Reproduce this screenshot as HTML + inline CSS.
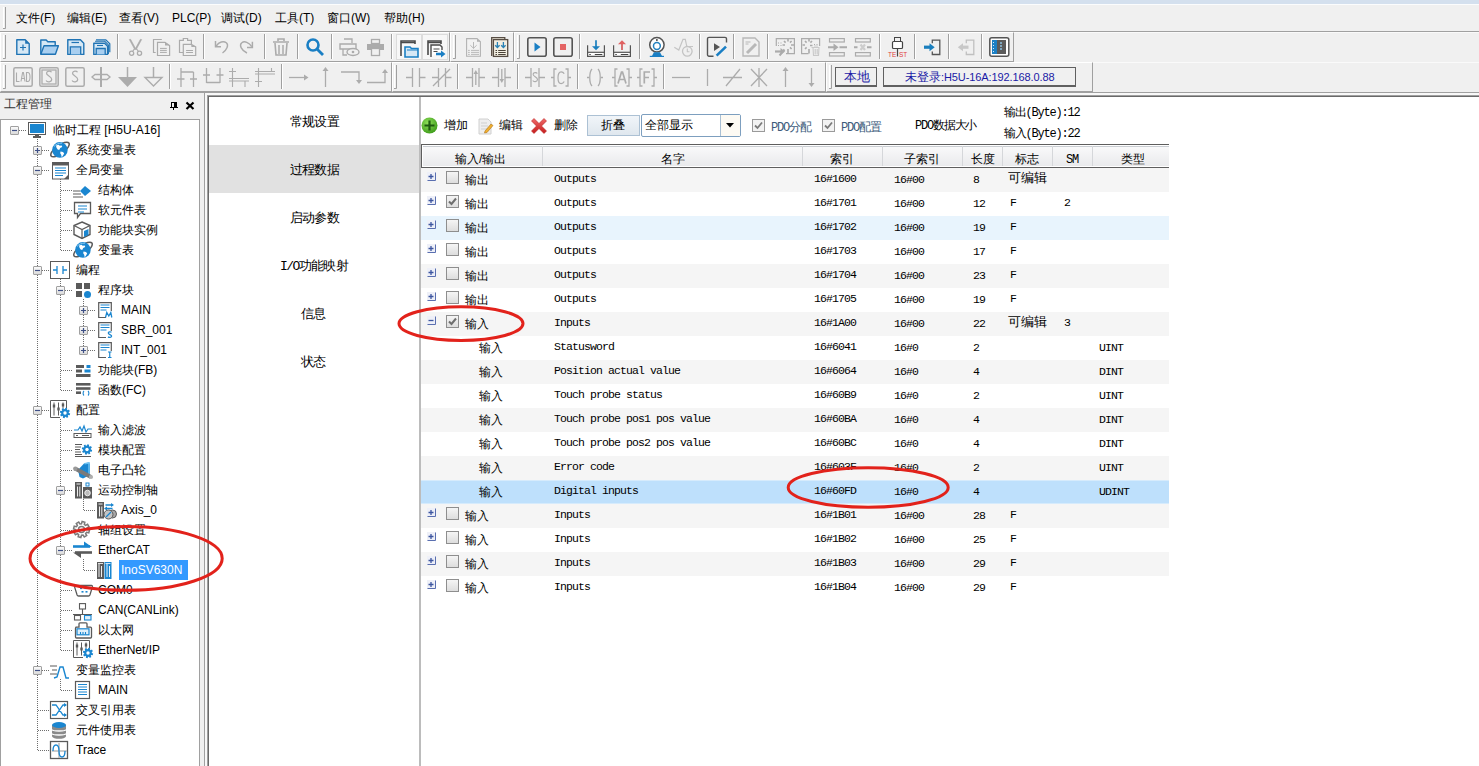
<!DOCTYPE html>
<html><head><meta charset="utf-8">
<style>
*{margin:0;padding:0;box-sizing:border-box}
html,body{width:1479px;height:766px;overflow:hidden;background:#f0f0f0;font-family:"Liberation Sans",sans-serif;font-size:12px;color:#000}
.a{position:absolute}
.t{position:absolute;white-space:nowrap;line-height:14px}
.set{font-size:13px;line-height:15px;letter-spacing:-0.8px}
.mono{font-family:"Liberation Mono",monospace}
#tree .t{font-size:12px}
.hl{position:absolute;height:1px}
.vl{position:absolute;width:1px}
.row{position:absolute;left:421px;width:748px;height:24px}
.row span{position:absolute;white-space:nowrap;line-height:14px}
.cj{top:5px;font-size:12px}
.mn{top:3.5px;font-family:"Liberation Mono",monospace;font-size:11.5px;letter-spacing:-0.9px}
.mn.ty{top:5px}
.mn.sub{top:5px}
.mn2{font-family:"Liberation Mono",monospace;font-size:12px;letter-spacing:-1.2px}
.exp{position:absolute;left:6px;top:4px}
.cb{position:absolute;left:25px;top:3px}
.cb2{position:absolute;width:13px;height:13px;border:1px solid #9a9a9a;background:linear-gradient(#f6f6f6,#e4e4e4)}
.cb2:after{content:"";position:absolute;left:2px;top:1px;width:4px;height:7px;border-right:2px solid #6a6a6a;border-bottom:2px solid #6a6a6a;transform:rotate(40deg);transform-origin:100% 100%}
.tt{font-size:12px;line-height:14px}
</style></head><body>
<!-- title strip -->
<div class="a" style="left:0;top:0;width:1479px;height:4px;background:#d4e0ee"></div>
<div class="a" style="left:0;top:4px;width:1479px;height:1px;background:#fbfcfd"></div>
<!-- menubar -->
<div class="a" style="left:0;top:5px;width:1479px;height:26px;background:#f0f0f0"></div>
<div class="hl" style="left:0;top:31px;width:1479px;background:#a0a0a0"></div>
<div class="hl" style="left:0;top:32px;width:1479px;background:#fafafa"></div>
<div id="menu">
<span class="t" style="left:16px;top:11px">文件(F)</span>
<span class="t" style="left:67px;top:11px">编辑(E)</span>
<span class="t" style="left:119px;top:11px">查看(V)</span>
<span class="t" style="left:172px;top:11px">PLC(P)</span>
<span class="t" style="left:221px;top:11px">调试(D)</span>
<span class="t" style="left:275px;top:11px">工具(T)</span>
<span class="t" style="left:327px;top:11px">窗口(W)</span>
<span class="t" style="left:384px;top:11px">帮助(H)</span>
</div>
<div class="hl" style="left:0;top:92px;width:1479px;background:#a0a0a0"></div>
<div class="hl" style="left:0;top:62px;width:1479px;background:#fafafa"></div>

<!-- left panel -->
<div class="t" style="left:4px;top:97px;color:#333">工程管理</div>
<svg class="a" style="left:168px;top:100px" width="30" height="12" shape-rendering="crispEdges"><path d="M3 2h6v5H3zM4 3v4h2V3z" fill="#000" fill-rule="evenodd"/><rect x="2" y="7" width="8" height="1" fill="#000"/><rect x="5" y="8" width="1" height="2" fill="#000"/><path d="M18.5 2.5l7 6.5M25.5 2.5l-7 6.5" stroke="#000" stroke-width="2.2" shape-rendering="geometricPrecision"/></svg>
<div class="a" id="tree" style="left:0;top:119px;width:200px;height:647px;background:#fff;border-left:1px solid #a0a0a0;border-top:1px solid #a0a0a0;border-right:1px solid #a0a0a0"></div>
<div class="vl" style="left:204px;top:92px;height:674px;background:#a0a0a0"></div>
<div class="a" style="left:205px;top:93px;width:1274px;height:2px;background:#f8f8f8"></div>
<div class="a" style="left:205px;top:93px;width:2px;height:673px;background:#f8f8f8"></div>
<div class="vl" style="left:207px;top:95px;height:671px;background:#a0a0a0"></div>
<div class="hl" style="left:207px;top:95px;width:1272px;background:#a0a0a0"></div>
<div class="vl" style="left:208px;top:96px;height:670px;background:#696969"></div>
<div class="hl" style="left:208px;top:96px;width:1271px;background:#696969"></div>

<!-- main content -->
<div class="a" style="left:209px;top:97px;width:1270px;height:669px;background:#fff"></div>
<div class="a" style="left:419px;top:97px;width:2px;height:669px;background:#bcbcbc"></div>
<!-- settings list -->
<div class="a" style="left:209px;top:145px;width:210px;height:48px;background:#e1e1e1"></div>
<div class="t set" style="left:290px;top:114px">常规设置</div>
<div class="t set" style="left:290px;top:162px">过程数据</div>
<div class="t set" style="left:290px;top:210px">启动参数</div>
<div class="t set" style="left:280px;top:258px"><span class="mn2" style="font-size:13px;letter-spacing:-1.5px">I/O</span>功能映射</div>
<div class="t set" style="left:301px;top:306px">信息</div>
<div class="t set" style="left:301px;top:354px">状态</div>

<!-- toolbars -->
<div class="a" style="left:0px;top:32px;width:450px;height:30px;background:#f0f0f0;border-top:1px solid #fff;border-left:1px solid #fff;border-right:1px solid #a0a0a0;border-bottom:1px solid #a0a0a0"></div>
<div class="a" style="left:450px;top:32px;width:64px;height:30px;background:#f0f0f0;border-top:1px solid #fff;border-left:1px solid #fff;border-right:1px solid #a0a0a0;border-bottom:1px solid #a0a0a0"></div>
<div class="a" style="left:514px;top:32px;width:500px;height:30px;background:#f0f0f0;border-top:1px solid #fff;border-left:1px solid #fff;border-right:1px solid #a0a0a0;border-bottom:1px solid #a0a0a0"></div>
<div class="a" style="left:0px;top:62px;width:392px;height:30px;background:#f0f0f0;border-top:1px solid #fff;border-left:1px solid #fff;border-right:1px solid #a0a0a0;border-bottom:1px solid #a0a0a0"></div>
<div class="a" style="left:392px;top:62px;width:434px;height:30px;background:#f0f0f0;border-top:1px solid #fff;border-left:1px solid #fff;border-right:1px solid #a0a0a0;border-bottom:1px solid #a0a0a0"></div>
<div class="a" style="left:826px;top:62px;width:267px;height:30px;background:#f0f0f0;border-top:1px solid #fff;border-left:1px solid #fff;border-right:1px solid #a0a0a0;border-bottom:1px solid #a0a0a0"></div>
<svg class="a" style="left:0;top:0" width="1100" height="92"><path d="M3.5 7V28" stroke="#fff"/><path d="M5.5 7V28.5H3" stroke="#a0a0a0" fill="none"/><path d="M3.5 35V58" stroke="#fff"/><path d="M5.5 35V58.5H3" stroke="#a0a0a0" fill="none"/><path d="M453.5 35V58" stroke="#fff"/><path d="M455.5 35V58.5H453" stroke="#a0a0a0" fill="none"/><path d="M517.5 35V58" stroke="#fff"/><path d="M519.5 35V58.5H517" stroke="#a0a0a0" fill="none"/><path d="M3.5 65V88" stroke="#fff"/><path d="M5.5 65V88.5H3" stroke="#a0a0a0" fill="none"/><path d="M394.5 65V88" stroke="#fff"/><path d="M396.5 65V88.5H394" stroke="#a0a0a0" fill="none"/><path d="M829.5 65V88" stroke="#fff"/><path d="M831.5 65V88.5H829" stroke="#a0a0a0" fill="none"/><path d="M117.5 34V59" stroke="#a0a0a0"/><path d="M118.5 34V59" stroke="#fff"/><path d="M203.5 34V59" stroke="#a0a0a0"/><path d="M204.5 34V59" stroke="#fff"/><path d="M264.5 34V59" stroke="#a0a0a0"/><path d="M265.5 34V59" stroke="#fff"/><path d="M297.5 34V59" stroke="#a0a0a0"/><path d="M298.5 34V59" stroke="#fff"/><path d="M331.5 34V59" stroke="#a0a0a0"/><path d="M332.5 34V59" stroke="#fff"/><path d="M391.5 34V59" stroke="#a0a0a0"/><path d="M392.5 34V59" stroke="#fff"/><path d="M579.5 34V59" stroke="#a0a0a0"/><path d="M580.5 34V59" stroke="#fff"/><path d="M639.5 34V59" stroke="#a0a0a0"/><path d="M640.5 34V59" stroke="#fff"/><path d="M699.5 34V59" stroke="#a0a0a0"/><path d="M700.5 34V59" stroke="#fff"/><path d="M733.5 34V59" stroke="#a0a0a0"/><path d="M734.5 34V59" stroke="#fff"/><path d="M767.5 34V59" stroke="#a0a0a0"/><path d="M768.5 34V59" stroke="#fff"/><path d="M879.5 34V59" stroke="#a0a0a0"/><path d="M880.5 34V59" stroke="#fff"/><path d="M914.5 34V59" stroke="#a0a0a0"/><path d="M915.5 34V59" stroke="#fff"/><path d="M948.5 34V59" stroke="#a0a0a0"/><path d="M949.5 34V59" stroke="#fff"/><path d="M981.5 34V59" stroke="#a0a0a0"/><path d="M982.5 34V59" stroke="#fff"/><path d="M169.5 64V89" stroke="#a0a0a0"/><path d="M170.5 64V89" stroke="#fff"/><path d="M281.5 64V89" stroke="#a0a0a0"/><path d="M282.5 64V89" stroke="#fff"/><path d="M457.5 64V89" stroke="#a0a0a0"/><path d="M458.5 64V89" stroke="#fff"/><path d="M517.5 64V89" stroke="#a0a0a0"/><path d="M518.5 64V89" stroke="#fff"/><path d="M577.5 64V89" stroke="#a0a0a0"/><path d="M578.5 64V89" stroke="#fff"/><path d="M663.5 64V89" stroke="#a0a0a0"/><path d="M664.5 64V89" stroke="#fff"/><rect x="396.5" y="34.5" width="25" height="25" fill="#f7f7f7" stroke="#dcdcdc"/><rect x="422.5" y="34.5" width="25" height="25" fill="#f7f7f7" stroke="#dcdcdc"/><g transform="translate(16,39)"><path d="M0.8 0.8h8.4l4 4v10.6H0.8z" fill="#d6e8f5" stroke="#1f73b4" stroke-width="1.4" stroke-linejoin="round"/><path d="M9.2 0.8l4 4h-4z" fill="#1f73b4"/><path d="M7 5.5v6M4 8.5h6" stroke="#1f73b4" stroke-width="1.2"/></g><g transform="translate(40,39)"><path d="M0.8 15.2V1h5.4l1.6 1.8h7.4v4.2" fill="#d6e8f5" stroke="#1f73b4" stroke-width="1.4" stroke-linejoin="round"/><path d="M0.8 15.2l3.2-8.4h14.4l-3 8.4z" fill="#a9cff0" stroke="#1f73b4" stroke-width="1.4" stroke-linejoin="round"/></g><g transform="translate(67,39)"><path d="M0.8 0.8h12.6l3.4 3.4v11.2H0.8z" fill="#d6e8f5" stroke="#1f73b4" stroke-width="1.4" stroke-linejoin="round"/><path d="M4.5 3.5h7.5" stroke="#1f73b4" stroke-width="1.2"/><path d="M3.3 15.4V7.8h10.4v7.6" fill="#a9cff0" stroke="#1f73b4" stroke-width="1.3"/></g><g transform="translate(93,39)"><path d="M3 0.8h9.8l4 4v8.5" fill="none" stroke="#1f73b4" stroke-width="1.2"/><path d="M2 2.3h9.8l3.6 3.6v9" fill="none" stroke="#1f73b4" stroke-width="1.1"/><path d="M0.8 4.2h10.8l3 3v8.2H0.8z" fill="#d6e8f5" stroke="#1f73b4" stroke-width="1.4" stroke-linejoin="round"/><path d="M4 6.5h6" stroke="#1f73b4" stroke-width="1.1"/><path d="M3.2 15.4V9.5h9v5.9" fill="#a9cff0" stroke="#1f73b4" stroke-width="1.3"/></g><g transform="translate(129,39)"><path d="M0.3 0.5L5.6 10.3 7 10.3 1.6 0.3zM12.7 0.5L7.4 10.3 6 10.3 11.4 0.3z" fill="#ababab" stroke="#ababab" stroke-width="0.6"/><path d="M5.8 9.5L3.5 12.5M7.2 9.5L9.5 12.5" stroke="#ababab" stroke-width="1.2"/><circle cx="2.6" cy="14.2" r="2.1" fill="none" stroke="#ababab" stroke-width="1.3"/><circle cx="10.5" cy="14.2" r="2.1" fill="none" stroke="#ababab" stroke-width="1.3"/></g><g transform="translate(153,39)"><path d="M8.8 0.5H0.5V13.5H2.7" fill="none" stroke="#ababab" stroke-width="1.2"/><path d="M4.5 3.3H12L16.6 6.6V16.5H4.5Z" fill="#f0f0f0" stroke="#ababab" stroke-width="1.2"/><path d="M12 3.3V6.6H16.6z" fill="#ababab"/><path d="M7 9.4h6.8M7 11.4h6.8M7 13.4h6.8" stroke="#ababab" stroke-width="1"/></g><g transform="translate(179,38)"><path d="M4.3 14.5H0.5V2.3H4.3V0.5H8.6V2.3H12.4V6.4" fill="none" stroke="#ababab" stroke-width="1.2"/><path d="M4.3 6.4H12.4L16.7 8.9V17.5H4.3Z" fill="#f0f0f0" stroke="#ababab" stroke-width="1.2"/><path d="M12.4 6.4V8.9H16.7z" fill="#ababab"/><path d="M7.1 12.5h6.9M7.1 14.5h6.9" stroke="#ababab" stroke-width="1"/></g><g transform="translate(215,41)"><path d="M0.5 0v5.8h5.5" fill="none" stroke="#ababab" stroke-width="1.5"/><path d="M1.2 5C4 1 8.5 -0.5 11.3 1.8 14 4 12 9 7.5 12" fill="none" stroke="#ababab" stroke-width="1.4"/></g><g transform="translate(240,41)"><path d="M12.4 0.8v5.6H7" fill="none" stroke="#ababab" stroke-width="1.5"/><path d="M11.8 5.6C9 1.5 4.5 -0.5 1.8 1.8 -1 4 1 9 7 12" fill="none" stroke="#ababab" stroke-width="1.4"/></g><g transform="translate(273,38)"><path d="M0 4h16M5 3V1h6v2" fill="none" stroke="#ababab" stroke-width="1.6"/><path d="M2 5l1 12h10l1-12" fill="none" stroke="#ababab" stroke-width="1.6"/><path d="M6 7v9M10 7v9" stroke="#ababab" stroke-width="1.5"/></g><g transform="translate(306,38)"><circle cx="7" cy="7" r="5.5" fill="none" stroke="#1a7fc4" stroke-width="2.6"/><path d="M11 11l6 6" stroke="#1a7fc4" stroke-width="2.8"/></g><g transform="translate(339,39)"><path d="M5 0h8v4" fill="none" stroke="#ababab" stroke-width="1.3"/><path d="M1 5h16v5H1z" fill="none" stroke="#ababab" stroke-width="1.4"/><path d="M4 10v6h4" fill="none" stroke="#ababab" stroke-width="1.3"/><ellipse cx="14" cy="13" rx="6" ry="3.5" fill="#f0f0f0" stroke="#ababab" stroke-width="1.4"/><circle cx="14" cy="13" r="1.3" fill="#ababab"/></g><g transform="translate(367,39)"><rect x="4.5" y="0.5" width="8" height="4" fill="none" stroke="#ababab" stroke-width="1.3"/><rect x="0" y="5" width="17" height="6" fill="#ababab"/><rect x="4.5" y="9.5" width="8" height="7" fill="#f0f0f0" stroke="#ababab" stroke-width="1.3"/></g><g transform="translate(400,40)"><path d="M1 16V1h14v3" fill="none" stroke="#4a4a4a" stroke-width="1.6"/><path d="M1 2.5h14" stroke="#4a4a4a" stroke-width="1.5"/><path d="M5 17V7h5l1.5 1.5H18V17z" fill="#d6e8f5" stroke="#1a7fc4" stroke-width="1.6"/><path d="M7 10h11" stroke="#1a7fc4"/></g><g transform="translate(427,40)"><path d="M1 15V1h13v3" fill="none" stroke="#4a4a4a" stroke-width="1.6"/><path d="M1 2.5h13" stroke="#4a4a4a" stroke-width="1.4"/><path d="M4 17V5h9l2 2v3" fill="#fff" stroke="#4a4a4a" stroke-width="1.4"/><path d="M6.5 9h6M6.5 11.5h4" stroke="#4a4a4a" stroke-width="1.2"/><path d="M9 14h7" stroke="#1a7fc4" stroke-width="2.5"/><path d="M14 10.5l4.5 3.5-4.5 3.5z" fill="#1a7fc4"/></g><g transform="translate(466,38)"><path d="M0.6 0.6H11L14.4 3.8V18.2H0.6Z" fill="#f2f2f2" stroke="#b2b2b2" stroke-width="1.1"/><path d="M11 0.6V3.8H14.4z" fill="#b2b2b2"/><path d="M7.5 4v6.3M4.3 7.2l3.2 3.1 3.2-3.1" fill="none" stroke="#b2b2b2" stroke-width="0.9"/><path d="M2 12.4h1.8M5 12.4h8M2 14.4h1.8M5 14.4h8M2 16.4h1.8M5 16.4h8" stroke="#b2b2b2" stroke-width="0.9"/></g><g transform="translate(491,37)"><path d="M0.7 19V0.7H13.8V2.5" fill="#f3efe2" stroke="#574d44" stroke-width="1.3"/><rect x="2.4" y="2.6" width="14.3" height="16.8" fill="#f3efe2" stroke="#574d44" stroke-width="1.3"/><path d="M6.4 5v5.5M12.4 5v5.5M4.2 8.2l2.2 2.3 2.2-2.3M10.2 8.2l2.2 2.3 2.2-2.3" fill="none" stroke="#2a82b4" stroke-width="1.3"/><path d="M4.5 13.5h1.5M7.2 13.5h7.5M4.5 15.5h1.5M7.2 15.5h7.5M4.5 17.5h1.5M7.2 17.5h7.5" stroke="#4a4238" stroke-width="1.1"/></g><g transform="translate(527,37)"><rect x="0.8" y="0.8" width="18.4" height="18.4" rx="2" fill="none" stroke="#555" stroke-width="1.6"/><path d="M7.5 5.5l6 4.5-6 4.5z" fill="#1a7fc4"/></g><g transform="translate(553,37)"><rect x="0.8" y="0.8" width="18.4" height="18.4" rx="2" fill="none" stroke="#555" stroke-width="1.6"/><rect x="7" y="7" width="6" height="6" fill="#e46464"/></g><g transform="translate(587,40)"><rect x="1.2" y="12.9" width="15.6" height="3" fill="#fff"/><path d="M0.6 5.2V16.4H17.4V5.2" fill="none" stroke="#555" stroke-width="1.2"/><path d="M0.6 12.3H17.4" stroke="#555" stroke-width="1.2"/><path d="M2.3 14.5h1.5M7.8 14.5h7.5" stroke="#444" stroke-width="1.1"/><path d="M9 0.2V7" stroke="#1a7fbe" stroke-width="1.7"/><path d="M5 6.3h8L9 10.2z" fill="#1a7fbe"/></g><g transform="translate(613,40)"><rect x="1.2" y="12.9" width="15.6" height="3" fill="#fff"/><path d="M0.6 5.2V16.4H17.4V5.2" fill="none" stroke="#555" stroke-width="1.2"/><path d="M0.6 12.3H17.4" stroke="#555" stroke-width="1.2"/><path d="M2.3 14.5h1.5M7.8 14.5h7.5" stroke="#444" stroke-width="1.1"/><path d="M9 3.8V10" stroke="#d45a5a" stroke-width="1.7"/><path d="M5 4.3h8L9 0.2z" fill="#e06060"/></g><g transform="translate(649,37)"><circle cx="7.9" cy="7.8" r="7.2" fill="#fff" stroke="#555" stroke-width="1.5"/><circle cx="7.9" cy="9" r="3.4" fill="#fff" stroke="#2583c0" stroke-width="1.5"/><circle cx="7.9" cy="3" r="0.9" fill="#333"/><path d="M4.9 15.3h6.1l2 3.7h-10z" fill="#1a7fc4"/><path d="M0.8 19.4h14.2" stroke="#1a7fc4" stroke-width="1.2"/></g><g transform="translate(674,37)"><path d="M0.3 10.2L4.8 13 9 2.3h2.3l1.5 7.2H19" fill="none" stroke="#c4c4c4" stroke-width="1.2"/><circle cx="13.3" cy="14.3" r="4.8" fill="#f0f0f0" stroke="#c4c4c4" stroke-width="1.3"/><path d="M13.3 11.5v3.3h2.2" fill="none" stroke="#c4c4c4" stroke-width="1.1"/></g><g transform="translate(707,37)"><path d="M6.5 19.3H2A1.5 1.5 0 0 1 0.5 17.8V1.9A1.5 1.5 0 0 1 2 0.4H18A1.5 1.5 0 0 1 19.5 1.9V5.5" fill="none" stroke="#555" stroke-width="1.4"/><path d="M7 6.2L13 10 7 14z" fill="#555"/><path d="M9.6 18.6L19 9.6" stroke="#1a7fc4" stroke-width="2.6"/></g><g transform="translate(742,37)"><path d="M1 1h12l4 4v14H1z" fill="none" stroke="#b8b8b8" stroke-width="1.4"/><path d="M3.5 5h5M3.5 7h3" stroke="#b8b8b8"/><path d="M5 16l9-9" stroke="#b8b8b8" stroke-width="3"/></g><g transform="translate(775,38)"><path d="M1.3 8V0.6H19.4V15.6H11" fill="none" stroke="#ababab" stroke-width="1.2"/><path d="M3 5h1M5.5 5h1M3 7.5h1M5.5 7.5h1" stroke="#ababab"/><path d="M9 3l1.6 1.6M16.6 3L15 4.6M16.6 11L15 9.4M13 1v2.5M7.5 7h2.5M16 7h3M13 11v4.6" stroke="#ababab" stroke-width="1.6"/><path d="M0 13.5h6.5" stroke="#ababab" stroke-width="2.2"/><path d="M5.5 10l4.5 3.5-4.5 3.5z" fill="#ababab"/><path d="M4.5 17.5l5-6" stroke="#ababab" stroke-width="2"/></g><g transform="translate(801,38)"><path d="M18.6 8V0.6H0.6V15.6H7.5" fill="none" stroke="#ababab" stroke-width="1.2"/><path d="M4 3l1.6 1.6M11 3L9.4 4.6M4 11l1.6-1.6M8 1v2.5M1.5 7h2.5M9 7.5h2.5M8 11v4.6" stroke="#ababab" stroke-width="1.6"/><path d="M13 6.5h1M15.5 6.5h1" stroke="#ababab"/><path d="M10.5 9.5h8M12 9.5l0.5 8h5l0.5-8M14.2 11v5.5M16.2 11v5.5M13 8h4" fill="none" stroke="#c9c9c9" stroke-width="1.1"/></g><g transform="translate(828,38)"><rect x="1.5" y="0.6" width="14.8" height="3.4" fill="none" stroke="#ababab" stroke-width="1.2"/><rect x="1.5" y="14.6" width="14.8" height="3.4" fill="none" stroke="#ababab" stroke-width="1.2"/><path d="M0 9.3h6.5M11.5 9.3h7.5" stroke="#ababab" stroke-width="2"/><path d="M5.5 5.5l5 3.8-5 3.8z" fill="#ababab"/></g><g transform="translate(854,38)"><rect x="1.5" y="0.6" width="14.8" height="3.4" fill="none" stroke="#ababab" stroke-width="1.2"/><rect x="1.5" y="14.6" width="14.8" height="3.4" fill="none" stroke="#ababab" stroke-width="1.2"/><path d="M0 9.3h3.5M13 9.3h4.5" stroke="#ababab" stroke-width="2"/><path d="M6.5 6.5l4.5 5.5M11 6.5l-4.5 5.5" stroke="#cdcdcd" stroke-width="2.2"/></g><g transform="translate(888,37)"><rect x="6.5" y="0.5" width="6" height="4" fill="none" stroke="#444"/><rect x="4.5" y="4.5" width="10" height="7" rx="1" fill="#fff" stroke="#444" stroke-width="1.2"/><path d="M9.5 11.5v8" stroke="#444" stroke-width="1.2"/><text x="0" y="19.5" font-size="6.5" fill="#e04040" font-family="Liberation Sans">TE</text><text x="11" y="19.5" font-size="6.5" fill="#e04040" font-family="Liberation Sans">ST</text></g><g transform="translate(923,39)"><path d="M9.3 4.2V1.2h7.5v14.3H9.3v-3" fill="none" stroke="#555" stroke-width="1.3"/><path d="M1 8.2h6.5" stroke="#1a7fbe" stroke-width="3.2"/><path d="M6.5 4.2l5.2 4-5.2 4z" fill="#1a7fbe"/></g><g transform="translate(957,39)"><path d="M9.3 4.2V1.2h7.5v14.3H9.3v-3" fill="none" stroke="#c0c0c0" stroke-width="1.3"/><path d="M5 8.2h6.5" stroke="#c8c8c8" stroke-width="3.2"/><path d="M6 4.2l-5.2 4 5.2 4z" fill="#c8c8c8"/></g><g transform="translate(989,37)"><rect x="0.8" y="0.8" width="19" height="18.4" rx="2" fill="#fff" stroke="#555" stroke-width="1.5"/><rect x="3" y="3" width="5" height="14" fill="#1a7fc4"/><rect x="8" y="3" width="9" height="14" fill="#5a5a5a"/><path d="M4.5 5v10" stroke="#cfe8f8" stroke-dasharray="1 2"/><path d="M11 6h2M11 9h2M11 12h2" stroke="#8cc0e0" stroke-width="1.5"/></g><g transform="translate(13,67)"><rect x="0.8" y="0.8" width="18.4" height="18.4" rx="1.5" fill="none" stroke="#acacac" stroke-width="1.5"/><path d="M3.5 5.5v9h3M8 14.5l1.6-9h0.8l1.6 9M8.6 11.5h2.8M13.5 5.5v9h1.2c1.8 0 2.3-1.8 2.3-4.5s-0.5-4.5-2.3-4.5z" fill="none" stroke="#acacac" stroke-width="1.1"/></g><g transform="translate(39,67)"><rect x="0.8" y="0.8" width="18.4" height="18.4" rx="1.5" fill="none" stroke="#acacac" stroke-width="1.5"/><rect x="3" y="3" width="14" height="14" fill="none" stroke="#acacac" stroke-width="1.3"/><path d="M12.5 5.2c-0.8-1.4-4.6-1.6-5 0.8-0.5 2.8 5.2 3.2 5.2 6.3 0 3.1-4.6 3.2-5.6 1.2" fill="none" stroke="#acacac" stroke-width="1.2"/></g><g transform="translate(65,67)"><rect x="0.8" y="0.8" width="18.4" height="18.4" rx="1.5" fill="none" stroke="#acacac" stroke-width="1.5"/><path d="M12.5 5.2c-0.8-1.4-4.6-1.6-5 0.8-0.5 2.8 5.2 3.2 5.2 6.3 0 3.1-4.6 3.2-5.6 1.2" fill="none" stroke="#acacac" stroke-width="1.2"/></g><g transform="translate(91,67)"><path d="M10 0v20" stroke="#acacac" stroke-width="2"/><path d="M1 10l3-2.5h12l3 2.5-3 2.5H4z" fill="#f0f0f0" stroke="#acacac" stroke-width="1.3"/><path d="M10 5v10" stroke="#acacac" stroke-width="2"/></g><g transform="translate(118,67)"><path d="M9.5 0v10" stroke="#acacac" stroke-width="1.5"/><path d="M0 10h19l-9.5 10z" fill="#acacac"/></g><g transform="translate(144,67)"><path d="M9.5 0v10" stroke="#acacac" stroke-width="1.5"/><path d="M1 10.5h17l-8.5 8.5z" fill="none" stroke="#acacac" stroke-width="1.4"/></g><g transform="translate(177,67)"><path d="M4 1v19M16.5 5v15M4 5h12.5M0 12h7.5M13 12h7" stroke="#acacac" stroke-width="1.3" fill="none"/></g><g transform="translate(203,67)"><path d="M3.5 1v15M17 1v15M3.5 15.5h13.5M0 8h7M13.5 8h7" stroke="#acacac" stroke-width="1.3" fill="none"/></g><g transform="translate(229,67)"><path d="M3.5 1v19M16 14v6M0 4.5h7M0 11.5h20M0 14h20" stroke="#acacac" stroke-width="1.1" fill="none"/><circle cx="3.5" cy="8" r="0.6" fill="#acacac"/></g><g transform="translate(255,67)"><path d="M3.5 1v19M16.5 1v4M0 4.5h20M0 7h20M0 14.5h7" stroke="#acacac" stroke-width="1.1" fill="none"/></g><g transform="translate(289,67)"><path d="M0 10.5h18" stroke="#acacac" stroke-width="1.3" fill="none"/><path d="M15 7.5l4.5 3-4.5 3z" fill="#acacac"/></g><g transform="translate(322,67)"><path d="M3.5 3v17" stroke="#acacac" stroke-width="1.3" fill="none"/><path d="M0.5 4l3-4 3 4z" fill="#acacac"/></g><g transform="translate(341,67)"><path d="M0 5h18v10" stroke="#acacac" stroke-width="1.3" fill="none"/><path d="M15 13l3 4 3-4z" fill="#acacac"/></g><g transform="translate(367,67)"><path d="M0 15.5h18v-10" stroke="#acacac" stroke-width="1.3" fill="none"/><path d="M15 6l3-4 3 4z" fill="#acacac"/></g><g transform="translate(406,67)"><path d="M6.5 1v19M13.5 1v19M0 10.5h6.5M13.5 10.5h6" stroke="#acacac" stroke-width="1.3" fill="none"/></g><g transform="translate(432,67)"><path d="M6.5 1v19M13.5 1v19M0 10.5h6.5M13.5 10.5h6M1 19L18 2" stroke="#acacac" stroke-width="1.3" fill="none"/></g><g transform="translate(466,67)"><path d="M6.5 1v19M13 1v19M0 10.5h6.5M13 10.5h6M9.8 6v12" stroke="#acacac" stroke-width="1.3" fill="none"/><path d="M7.5 7l2.3-4 2.3 4z" fill="#acacac"/></g><g transform="translate(492,67)"><path d="M6.5 1v19M13 1v19M0 10.5h6.5M13 10.5h6M9.8 2v11" stroke="#acacac" stroke-width="1.3" fill="none"/><path d="M7.5 12l2.3 4 2.3-4z" fill="#acacac"/></g><g transform="translate(525,67)"><path d="M6 1v19M14 1v19M0 10.5h6M14 10.5h6" stroke="#acacac" stroke-width="1.3" fill="none"/><path d="M12.3 5.5c-0.7-1.2-3.8-1.3-4.2 0.7-0.4 2.4 4.4 2.7 4.4 5.3 0 2.6-3.9 2.7-4.7 1" fill="none" stroke="#acacac" stroke-width="1.1" transform="translate(0,1)"/></g><g transform="translate(551,67)"><path d="M0 10.5h3M17 10.5h3M5.5 2h-2.5v17h2.5M14.5 2h2.5v17h-2.5" stroke="#acacac" stroke-width="1.3" fill="none"/><path d="M13.2 6.8c-0.7-1.4-1.8-2-3-2-2.1 0-3.2 2.3-3.2 5.9s1.1 5.9 3.2 5.9c1.2 0 2.3-0.6 3-2" fill="none" stroke="#acacac" stroke-width="1.2"/></g><g transform="translate(587,67)"><path d="M5 2c-3 3-3 14 0 17M11 2c3 3 3 14 0 17M0 10.5h2M14 10.5h2" stroke="#acacac" stroke-width="1.3" fill="none"/></g><g transform="translate(612,67)"><path d="M0 10.5h3M17 10.5h3M5.5 2h-2.5v17h2.5M14.5 2h2.5v17h-2.5" stroke="#acacac" stroke-width="1.3" fill="none"/><path d="M6 16.5l3.5-11.5h1l3.5 11.5M7.3 12.5h5.4" fill="none" stroke="#acacac" stroke-width="1.7"/></g><g transform="translate(637,67)"><path d="M0 10.5h3M17 10.5h3M5.5 2h-2.5v17h2.5M14.5 2h2.5v17h-2.5" stroke="#acacac" stroke-width="1.3" fill="none"/><path d="M7.3 16.5v-11.5h5.7M7.3 10.5h4.7" fill="none" stroke="#acacac" stroke-width="1.7"/></g><g transform="translate(672,67)"><path d="M0 10.5h18" stroke="#acacac" stroke-width="1.3" fill="none"/></g><g transform="translate(707,67)"><path d="M0.5 2v17" stroke="#acacac" stroke-width="1.3" fill="none"/></g><g transform="translate(723,67)"><path d="M0 10.5h19M3 19L17 2" stroke="#acacac" stroke-width="1.3" fill="none"/></g><g transform="translate(750,67)"><path d="M9 1v19M1 2l16 17M17 2L1 19" stroke="#acacac" stroke-width="1.3" fill="none"/></g><g transform="translate(782,67)"><path d="M3.5 3v17" stroke="#acacac" stroke-width="1.3" fill="none"/><path d="M0.5 4l3-4 3 4z" fill="#acacac"/></g><g transform="translate(808,67)"><path d="M3.5 1v16" stroke="#acacac" stroke-width="1.3" fill="none"/><path d="M0.5 16l3 4 3-4z" fill="#acacac"/></g></svg>
<div class="a" style="left:835px;top:67px;width:42px;height:20px;border:1px solid #606060;border-right-color:#606060;border-bottom:2px solid #606060;background:#f0f0f0"></div>
<span class="t" style="left:844px;top:70px;color:#1a1aa6;font-size:12.5px">本地</span>
<div class="a" style="left:883px;top:67px;width:193px;height:20px;border:1px solid #606060;border-bottom:2px solid #606060;background:#f0f0f0"></div>
<span class="t" style="left:905px;top:70px;color:#1a1aa6;font-size:12px">未登录<span style="font-size:11px;letter-spacing:-0.1px">:H5U-16A:192.168.0.88</span></span>
<!-- tree -->
<svg class="a" style="left:0;top:0" width="200" height="766"><defs><linearGradient id="expg" x1="0" y1="0" x2="0" y2="1"><stop offset="0" stop-color="#fdfdfd"/><stop offset="1" stop-color="#d8d8d8"/></linearGradient></defs><style>.dl{stroke:#6e6e6e;stroke-width:1;stroke-dasharray:1 1;shape-rendering:crispEdges}</style>
<line x1="37.5" y1="138.5" x2="37.5" y2="750.5" class="dl"/>
<line x1="60.5" y1="178.5" x2="60.5" y2="250.5" class="dl"/>
<line x1="60.5" y1="278.5" x2="60.5" y2="390.5" class="dl"/>
<line x1="83.5" y1="298.5" x2="83.5" y2="350.5" class="dl"/>
<line x1="60.5" y1="418.5" x2="60.5" y2="650.5" class="dl"/>
<line x1="83.5" y1="498.5" x2="83.5" y2="510.5" class="dl"/>
<line x1="83.5" y1="558.5" x2="83.5" y2="570.5" class="dl"/>
<line x1="60.5" y1="678.5" x2="60.5" y2="690.5" class="dl"/>
<line x1="19" y1="130.5" x2="27" y2="130.5" class="dl"/>
<g transform="translate(10,126)"><rect x="0.5" y="0.5" width="8" height="8" fill="url(#expg)" stroke="#a0a0a0" rx="0.5"/><path d="M2 4.5h5" stroke="#3e4f86" stroke-width="1.2"/></g>
<g transform="translate(28,122)"><rect x="0.5" y="0.5" width="17" height="12" fill="#fff" stroke="#5a5a5a"/><rect x="2" y="2" width="14" height="9" fill="#1a86d0"/><rect x="7" y="13" width="4" height="1.5" fill="#5a5a5a"/><rect x="5" y="14" width="8" height="2" fill="#5a5a5a"/></g>
<line x1="37.5" y1="150.5" x2="49" y2="150.5" class="dl"/>
<g transform="translate(33,146)"><rect x="0.5" y="0.5" width="8" height="8" fill="url(#expg)" stroke="#a0a0a0" rx="0.5"/><path d="M2 4.5h5M4.5 2v5" stroke="#3e4f86" stroke-width="1.2"/></g>
<g transform="translate(50,141)"><ellipse cx="10" cy="8.5" rx="11" ry="4.2" transform="rotate(-36 10 8.5)" fill="none" stroke="#5a5a5a" stroke-width="1.5"/><circle cx="9.9" cy="8.9" r="7.8" fill="#1a86d0"/><path d="M6 4.5l2.5-0.8 1.2 1 2-0.3 0.5 1.5-2 1.2-1 1.8-1.5-0.5-1.2-1.6z" fill="#fff"/><path d="M10.5 10.5l2.5 0.5 1.2 1.5-1.5 2.5-1 1.2-0.5-2.5-1-1.5z" fill="#fff"/><path d="M4 5.5c2-2.5 5-3.5 8-3.3" fill="none" stroke="#9fd6f5" stroke-width="0.8"/></g>
<line x1="37.5" y1="170.5" x2="49" y2="170.5" class="dl"/>
<g transform="translate(33,166)"><rect x="0.5" y="0.5" width="8" height="8" fill="url(#expg)" stroke="#a0a0a0" rx="0.5"/><path d="M2 4.5h5" stroke="#3e4f86" stroke-width="1.2"/></g>
<g transform="translate(52,162)"><rect x="0.5" y="0.5" width="16" height="16.5" fill="#fff" stroke="#5a5a5a"/><rect x="0.5" y="0.5" width="16" height="3" fill="#5a5a5a"/><path d="M3 6h11M3 8.5h11M3 11h11M3 13.5h8" stroke="#1a86d0" stroke-width="1.2"/><path d="M12 17l4.5-4.5v4.5z" fill="#5a5a5a"/></g>
<line x1="60.5" y1="190.5" x2="72" y2="190.5" class="dl"/>
<g transform="translate(73,185)"><path d="M0 6h7M0 9h8M0 12h10" stroke="#5a5a5a" stroke-width="1.2"/><path d="M12 1l6 5-6 5-5-5z" fill="#1a86d0"/></g>
<line x1="60.5" y1="210.5" x2="72" y2="210.5" class="dl"/>
<g transform="translate(73,201)"><path d="M1.5 1.5h16v11h-10l-3 4v-4h-3z" fill="#fff" stroke="#5a5a5a" stroke-width="1.3"/><path d="M5 5h9M5 8h9M5 11h6" stroke="#1a86d0" stroke-width="1.2"/></g>
<line x1="60.5" y1="230.5" x2="72" y2="230.5" class="dl"/>
<g transform="translate(73,221)"><path d="M9 1l8 3.5v9l-8 4-8-4v-9z" fill="#fff" stroke="#5a5a5a" stroke-width="1.4"/><path d="M1 4.5l8 4 8-4M9 8.5v9" fill="none" stroke="#5a5a5a" stroke-width="1.2"/><path d="M11 10l4.5-2v6l-4.5 2z" fill="#1a86d0"/></g>
<line x1="60.5" y1="250.5" x2="72" y2="250.5" class="dl"/>
<g transform="translate(73,241)"><ellipse cx="10" cy="8.5" rx="11" ry="4.2" transform="rotate(-36 10 8.5)" fill="none" stroke="#5a5a5a" stroke-width="1.5"/><circle cx="9.9" cy="8.9" r="7.8" fill="#1a86d0"/><path d="M6 4.5l2.5-0.8 1.2 1 2-0.3 0.5 1.5-2 1.2-1 1.8-1.5-0.5-1.2-1.6z" fill="#fff"/><path d="M10.5 10.5l2.5 0.5 1.2 1.5-1.5 2.5-1 1.2-0.5-2.5-1-1.5z" fill="#fff"/><path d="M4 5.5c2-2.5 5-3.5 8-3.3" fill="none" stroke="#9fd6f5" stroke-width="0.8"/></g>
<line x1="37.5" y1="270.5" x2="49" y2="270.5" class="dl"/>
<g transform="translate(33,266)"><rect x="0.5" y="0.5" width="8" height="8" fill="url(#expg)" stroke="#a0a0a0" rx="0.5"/><path d="M2 4.5h5" stroke="#3e4f86" stroke-width="1.2"/></g>
<g transform="translate(50,261)"><rect x="0.5" y="0.5" width="19" height="17" fill="#fff" stroke="#5a5a5a"/><path d="M3 9h4M7 5v8M13 5v8M13 9h4" stroke="#1a86d0" stroke-width="1.3"/></g>
<line x1="60.5" y1="290.5" x2="72" y2="290.5" class="dl"/>
<g transform="translate(56,286)"><rect x="0.5" y="0.5" width="8" height="8" fill="url(#expg)" stroke="#a0a0a0" rx="0.5"/><path d="M2 4.5h5" stroke="#3e4f86" stroke-width="1.2"/></g>
<g transform="translate(76,283)"><rect x="0" y="0" width="6" height="6" fill="#5a5a5a"/><rect x="8" y="0" width="6" height="6" fill="#5a5a5a"/><rect x="0" y="8" width="6" height="6" fill="#5a5a5a"/><circle cx="11.5" cy="11.5" r="3.5" fill="#1a86d0"/></g>
<line x1="83.5" y1="310.5" x2="95" y2="310.5" class="dl"/>
<g transform="translate(79,306)"><rect x="0.5" y="0.5" width="8" height="8" fill="url(#expg)" stroke="#a0a0a0" rx="0.5"/><path d="M2 4.5h5M4.5 2v5" stroke="#3e4f86" stroke-width="1.2"/></g>
<g transform="translate(98,302)"><path d="M8 15.5H0.7V0.7H13.3V9" fill="#fff" stroke="#5a5a5a" stroke-width="1.2"/><path d="M2.5 3h9M2.5 5.5h9M2.5 8h6" stroke="#1a86d0" stroke-width="1.2"/><path d="M7.5 15.5l1.3-5 2 3.5 2-3.5 1 5" fill="none" stroke="#1a86d0" stroke-width="1.3"/></g>
<line x1="83.5" y1="330.5" x2="95" y2="330.5" class="dl"/>
<g transform="translate(79,326)"><rect x="0.5" y="0.5" width="8" height="8" fill="url(#expg)" stroke="#a0a0a0" rx="0.5"/><path d="M2 4.5h5M4.5 2v5" stroke="#3e4f86" stroke-width="1.2"/></g>
<g transform="translate(98,322)"><path d="M8 15.5H0.7V0.7H13.3V9" fill="#fff" stroke="#5a5a5a" stroke-width="1.2"/><path d="M2.5 3h9M2.5 5.5h9M2.5 8h6" stroke="#1a86d0" stroke-width="1.2"/><path d="M13.5 10.3c-0.8-0.6-3.2-0.7-3.2 0.8 0 1.6 3.3 1.3 3.3 2.9 0 1.6-2.6 1.6-3.6 0.9" fill="none" stroke="#1a86d0" stroke-width="1.3"/></g>
<line x1="83.5" y1="350.5" x2="95" y2="350.5" class="dl"/>
<g transform="translate(79,346)"><rect x="0.5" y="0.5" width="8" height="8" fill="url(#expg)" stroke="#a0a0a0" rx="0.5"/><path d="M2 4.5h5M4.5 2v5" stroke="#3e4f86" stroke-width="1.2"/></g>
<g transform="translate(98,342)"><path d="M8 15.5H0.7V0.7H13.3V9" fill="#fff" stroke="#5a5a5a" stroke-width="1.2"/><path d="M2.5 3h9M2.5 5.5h9M2.5 8h6" stroke="#1a86d0" stroke-width="1.2"/><path d="M10 10h3.5M11.75 10v5.5M10 15.5h3.5" fill="none" stroke="#1a86d0" stroke-width="1.2"/></g>
<line x1="60.5" y1="370.5" x2="72" y2="370.5" class="dl"/>
<g transform="translate(76,365)"><rect x="0" y="0" width="8" height="3" fill="#5a5a5a"/><rect x="10.5" y="0" width="4" height="3" fill="#1a86d0"/><rect x="0" y="4.5" width="6" height="3" fill="#5a5a5a"/><rect x="8.5" y="4.5" width="6" height="3" fill="#1a86d0"/><rect x="0" y="9" width="14.5" height="3" fill="#5a5a5a"/></g>
<line x1="60.5" y1="390.5" x2="72" y2="390.5" class="dl"/>
<g transform="translate(76,383)"><rect x="0" y="0" width="14.5" height="2.6" fill="#5a5a5a"/><rect x="0" y="4.2" width="14.5" height="2.6" fill="#5a5a5a"/><rect x="0" y="8.4" width="5" height="2.6" fill="#5a5a5a"/><path d="M8 8c-1.2 1-1.2 3.5 0 4.5M12 8c1.2 1 1.2 3.5 0 4.5" fill="none" stroke="#1a86d0" stroke-width="1.1"/></g>
<line x1="37.5" y1="410.5" x2="49" y2="410.5" class="dl"/>
<g transform="translate(33,406)"><rect x="0.5" y="0.5" width="8" height="8" fill="url(#expg)" stroke="#a0a0a0" rx="0.5"/><path d="M2 4.5h5" stroke="#3e4f86" stroke-width="1.2"/></g>
<g transform="translate(50,400)"><path d="M10 17.5H0.5V0.5H16.5V8" fill="#fff" stroke="#5a5a5a"/><path d="M4 2.5v13M8.5 2.5v13M13 2.5v6" stroke="#5a5a5a" stroke-width="1"/><rect x="2.8" y="4.5" width="2.4" height="3" fill="#5a5a5a"/><rect x="7.3" y="7.5" width="2.4" height="3" fill="#5a5a5a"/><rect x="11.8" y="3.5" width="2.4" height="3" fill="#5a5a5a"/><path d="M18.90 13.00 L20.18 13.41 L19.72 15.18 L18.40 14.91 L17.76 15.76 L18.38 16.95 L16.80 17.88 L16.06 16.75 L15.00 16.90 L14.59 18.18 L12.82 17.72 L13.09 16.40 L12.24 15.76 L11.05 16.38 L10.12 14.80 L11.25 14.06 L11.10 13.00 L9.82 12.59 L10.28 10.82 L11.60 11.09 L12.24 10.24 L11.62 9.05 L13.20 8.12 L13.94 9.25 L15.00 9.10 L15.41 7.82 L17.18 8.28 L16.91 9.60 L17.76 10.24 L18.95 9.62 L19.88 11.20 L18.75 11.94Z" fill="#1a86d0"/><circle cx="15" cy="13" r="1.7" fill="#fff"/></g>
<line x1="60.5" y1="430.5" x2="72" y2="430.5" class="dl"/>
<g transform="translate(73,423)"><path d="M1 7h4l2-3 2 4 2-5 2 6 2-3h4" fill="none" stroke="#1a86d0" stroke-width="1.2"/><rect x="1" y="10.5" width="17" height="4" fill="#fff" stroke="#5a5a5a"/><path d="M3 12.5h2M9 12.5h7" stroke="#5a5a5a"/></g>
<line x1="60.5" y1="450.5" x2="72" y2="450.5" class="dl"/>
<g transform="translate(74,444)"><path d="M1 0.5h7M1 3h6M1 5.5h5M1 8h6M1 10.5h7M1 12.5h16" stroke="#5a5a5a" stroke-width="1"/><path d="M16.90 5.50 L18.18 5.91 L17.72 7.68 L16.40 7.41 L15.76 8.26 L16.38 9.45 L14.80 10.38 L14.06 9.25 L13.00 9.40 L12.59 10.68 L10.82 10.22 L11.09 8.90 L10.24 8.26 L9.05 8.88 L8.12 7.30 L9.25 6.56 L9.10 5.50 L7.82 5.09 L8.28 3.32 L9.60 3.59 L10.24 2.74 L9.62 1.55 L11.20 0.62 L11.94 1.75 L13.00 1.60 L13.41 0.32 L15.18 0.78 L14.91 2.10 L15.76 2.74 L16.95 2.12 L17.88 3.70 L16.75 4.44Z" fill="#1a86d0"/><circle cx="13" cy="5.5" r="1.7" fill="#fff"/></g>
<line x1="60.5" y1="470.5" x2="72" y2="470.5" class="dl"/>
<g transform="translate(73,462)"><path d="M5 8L11 1.5 15.5 0.5 17 2V13L10 16.5 6.5 15z" fill="#1a86d0"/><path d="M11.5 1.8L16 1V12.5" fill="none" stroke="#6cc0f0" stroke-width="1.5"/><path d="M2 6.5l16 8.5" stroke="#7a7a7a" stroke-width="4.2"/><circle cx="2.3" cy="6.8" r="2.2" fill="#9a9a9a"/><circle cx="18" cy="15" r="2.1" fill="#b0b0b0"/></g>
<line x1="60.5" y1="490.5" x2="72" y2="490.5" class="dl"/>
<g transform="translate(56,486)"><rect x="0.5" y="0.5" width="8" height="8" fill="url(#expg)" stroke="#a0a0a0" rx="0.5"/><path d="M2 4.5h5" stroke="#3e4f86" stroke-width="1.2"/></g>
<g transform="translate(75,482)"><rect x="0" y="0" width="7" height="16.5" fill="#5a5a5a"/><path d="M1.5 2h4M4.8 4.5v10M2.5 4.5v10" stroke="#fff" stroke-width="0.9"/><rect x="8" y="5" width="9" height="11.5" fill="#5a5a5a"/><circle cx="12.5" cy="11" r="2.8" fill="#bdbdbd" stroke="#fff" stroke-width="0.8"/><rect x="10.5" y="0.5" width="4" height="4" fill="#1a86d0"/><rect x="11.5" y="1.5" width="2" height="2" fill="#fff"/></g>
<line x1="83.5" y1="510.5" x2="95" y2="510.5" class="dl"/>
<g transform="translate(97,502)"><rect x="0" y="0" width="7" height="16.5" fill="#5a5a5a"/><path d="M1.5 2h4M4.8 4.5v10M2.5 4.5v10" stroke="#fff" stroke-width="0.9"/><path d="M8.5 3h7M8.5 6.5h7" stroke="#1a86d0" stroke-width="1.3"/><path d="M14 1l3 2-3 2zM10 4.5l-3 2 3 2z" fill="#1a86d0"/><circle cx="15.5" cy="12" r="4" fill="#a8a8a8" stroke="#5a5a5a"/><circle cx="11.5" cy="12.5" r="4.5" fill="#c4c4c4" stroke="#5a5a5a"/><path d="M9 15l5-5" stroke="#1a86d0" stroke-width="1.2"/></g>
<line x1="60.5" y1="530.5" x2="72" y2="530.5" class="dl"/>
<g transform="translate(73,521)"><path d="M14.30 8.50 L16.48 9.13 L15.77 11.85 L13.56 11.33 L12.60 12.60 L13.70 14.58 L11.27 16.01 L10.07 14.08 L8.50 14.30 L7.87 16.48 L5.15 15.77 L5.67 13.56 L4.40 12.60 L2.42 13.70 L0.99 11.27 L2.92 10.07 L2.70 8.50 L0.52 7.87 L1.23 5.15 L3.44 5.67 L4.40 4.40 L3.30 2.42 L5.73 0.99 L6.93 2.92 L8.50 2.70 L9.13 0.52 L11.85 1.23 L11.33 3.44 L12.60 4.40 L14.58 3.30 L16.01 5.73 L14.08 6.93Z" fill="#fff" stroke="#7a7a7a" stroke-width="1.5"/><circle cx="8.5" cy="8.5" r="3" fill="#fff" stroke="#7a7a7a" stroke-width="1.5"/></g>
<line x1="60.5" y1="550.5" x2="72" y2="550.5" class="dl"/>
<g transform="translate(56,546)"><rect x="0.5" y="0.5" width="8" height="8" fill="url(#expg)" stroke="#a0a0a0" rx="0.5"/><path d="M2 4.5h5" stroke="#3e4f86" stroke-width="1.2"/></g>
<g transform="translate(73,541)"><path d="M0 5.5h17" stroke="#1a86d0" stroke-width="2.6"/><path d="M11 0.5l8 5.5h-8z" fill="#1a86d0"/><path d="M2 11.5h17" stroke="#5a5a5a" stroke-width="2.6"/><path d="M8 17l-8-5.5h8z" fill="#5a5a5a"/></g>
<line x1="83.5" y1="570.5" x2="95" y2="570.5" class="dl"/>
<g transform="translate(97,562)"><rect x="0" y="0" width="7" height="17" fill="#5a5a5a"/><rect x="7.5" y="0" width="7" height="17" fill="#1a86d0"/><path d="M2 2v13M4.5 4v11M10 2v13M12.5 4v11" stroke="#fff" stroke-width="0.9"/><path d="M1 1.5h5M8.5 1.5h5" stroke="#fff" stroke-width="0.8"/></g>
<line x1="60.5" y1="590.5" x2="72" y2="590.5" class="dl"/>
<g transform="translate(74,584)"><path d="M1.5 1.5h16a1 1 0 0 1 1 1.2l-2.6 8.3a1.5 1.5 0 0 1-1.4 1h-10a1.5 1.5 0 0 1-1.4-1l-2.6-8.3a1 1 0 0 1 1-1.2z" fill="#fff" stroke="#5a5a5a" stroke-width="1.3"/><rect x="6" y="3.5" width="2" height="1.6" fill="#1a86d0"/><rect x="10.5" y="3.5" width="2" height="1.6" fill="#1a86d0"/><rect x="7.5" y="7" width="2" height="1.6" fill="#1a86d0"/><rect x="11.5" y="7" width="2" height="1.6" fill="#1a86d0"/></g>
<line x1="60.5" y1="610.5" x2="72" y2="610.5" class="dl"/>
<g transform="translate(73,603)"><rect x="6.5" y="0.6" width="6" height="5.4" fill="#fff" stroke="#5a5a5a" stroke-width="1.1"/><path d="M9.5 6v5.5M0 11.5h19" stroke="#5a5a5a" stroke-width="1.1"/><rect x="1.5" y="12.5" width="6" height="4.5" fill="#fff" stroke="#5a5a5a" stroke-width="1.1"/><rect x="11.5" y="12.5" width="6.5" height="4.5" fill="#dff0fb" stroke="#1a86d0" stroke-width="1.1"/></g>
<line x1="60.5" y1="630.5" x2="72" y2="630.5" class="dl"/>
<g transform="translate(73,622)"><path d="M2.5 5.2h3.5V1.8a1 1 0 0 1 1-1h6a1 1 0 0 1 1 1v3.4h3.5a1 1 0 0 1 1 1v8.8a1 1 0 0 1-1 1h-14a1 1 0 0 1-1-1v-8.8a1 1 0 0 1 1-1z" fill="#fff" stroke="#5a5a5a" stroke-width="1.3"/><rect x="4" y="6.8" width="12" height="6" fill="#dff0fb" stroke="#1a86d0" stroke-width="1.2"/><path d="M7.5 10v2.5M10 10v2.5M12.5 10v2.5" stroke="#1a86d0" stroke-width="1.1"/></g>
<line x1="60.5" y1="650.5" x2="72" y2="650.5" class="dl"/>
<g transform="translate(73,640)"><path d="M10 17.5H0.5V0.5H16.5V8" fill="#fff" stroke="#5a5a5a"/><path d="M4 2.5v13M8.5 2.5v13M13 2.5v6" stroke="#5a5a5a" stroke-width="1"/><rect x="2.8" y="4.5" width="2.4" height="3" fill="#5a5a5a"/><rect x="7.3" y="7.5" width="2.4" height="3" fill="#5a5a5a"/><rect x="11.8" y="3.5" width="2.4" height="3" fill="#5a5a5a"/><path d="M18.90 13.00 L20.18 13.41 L19.72 15.18 L18.40 14.91 L17.76 15.76 L18.38 16.95 L16.80 17.88 L16.06 16.75 L15.00 16.90 L14.59 18.18 L12.82 17.72 L13.09 16.40 L12.24 15.76 L11.05 16.38 L10.12 14.80 L11.25 14.06 L11.10 13.00 L9.82 12.59 L10.28 10.82 L11.60 11.09 L12.24 10.24 L11.62 9.05 L13.20 8.12 L13.94 9.25 L15.00 9.10 L15.41 7.82 L17.18 8.28 L16.91 9.60 L17.76 10.24 L18.95 9.62 L19.88 11.20 L18.75 11.94Z" fill="#1a86d0"/><circle cx="15" cy="13" r="1.7" fill="#fff"/></g>
<line x1="37.5" y1="670.5" x2="49" y2="670.5" class="dl"/>
<g transform="translate(33,666)"><rect x="0.5" y="0.5" width="8" height="8" fill="url(#expg)" stroke="#a0a0a0" rx="0.5"/><path d="M2 4.5h5" stroke="#3e4f86" stroke-width="1.2"/></g>
<g transform="translate(50,662)"><path d="M0 4h7M2 8h5M0 12h7" stroke="#5a5a5a" stroke-width="1.2"/><path d="M4 16l3-1 3-10 3 0 3 11h3" fill="none" stroke="#1a86d0" stroke-width="1.4"/></g>
<line x1="60.5" y1="690.5" x2="72" y2="690.5" class="dl"/>
<g transform="translate(75,681)"><rect x="0.5" y="0.5" width="14" height="17" fill="#fff" stroke="#5a5a5a" stroke-width="1.2"/><path d="M3 3.5h9M3 6h9M3 8.5h9M3 11h9M3 13.5h9" stroke="#1a86d0" stroke-width="1.2"/></g>
<line x1="37.5" y1="710.5" x2="49" y2="710.5" class="dl"/>
<g transform="translate(50,701)"><rect x="0.5" y="0.5" width="17" height="17" fill="#fff" stroke="#5a5a5a" stroke-width="1.2"/><path d="M2 4h4l7 10h3M2 14h4l7-10h3" fill="none" stroke="#1a86d0" stroke-width="1.3"/><path d="M14 2l3 2-3 2zM14 12l3 2-3 2z" fill="#1a86d0"/></g>
<line x1="37.5" y1="730.5" x2="49" y2="730.5" class="dl"/>
<g transform="translate(51,721)"><path d="M1 4v11c0 2 4 2.8 7 2.8s7-0.8 7-2.8v-11" fill="#8a8a8a"/><ellipse cx="8" cy="4" rx="7" ry="3" fill="#1a86d0"/><path d="M1 8.5c0 2 14 2 14 0M1 12.5c0 2 14 2 14 0" fill="none" stroke="#fff" stroke-width="1.3"/></g>
<line x1="37.5" y1="750.5" x2="49" y2="750.5" class="dl"/>
<g transform="translate(50,741)"><rect x="0.5" y="0.5" width="17" height="17" fill="#fff" stroke="#5a5a5a" stroke-width="1.3"/><path d="M9 2v15M2 10h15" stroke="#bbb" stroke-width="1.5"/><path d="M3 10c0-8 6-8 6 0s6 8 6 0" fill="none" stroke="#1a86d0" stroke-width="1.3"/></g>
</svg>
<span class="t tt" style="left:53px;top:123px">临时工程 [H5U-A16]</span>
<span class="t tt" style="left:76px;top:143px">系统变量表</span>
<span class="t tt" style="left:76px;top:163px">全局变量</span>
<span class="t tt" style="left:98px;top:183px">结构体</span>
<span class="t tt" style="left:98px;top:203px">软元件表</span>
<span class="t tt" style="left:98px;top:223px">功能块实例</span>
<span class="t tt" style="left:98px;top:243px">变量表</span>
<span class="t tt" style="left:76px;top:263px">编程</span>
<span class="t tt" style="left:98px;top:283px">程序块</span>
<span class="t tt" style="left:121px;top:303px">MAIN</span>
<span class="t tt" style="left:121px;top:323px">SBR_001</span>
<span class="t tt" style="left:121px;top:343px">INT_001</span>
<span class="t tt" style="left:98px;top:363px">功能块(FB)</span>
<span class="t tt" style="left:98px;top:383px">函数(FC)</span>
<span class="t tt" style="left:76px;top:403px">配置</span>
<span class="t tt" style="left:98px;top:423px">输入滤波</span>
<span class="t tt" style="left:98px;top:443px">模块配置</span>
<span class="t tt" style="left:98px;top:463px">电子凸轮</span>
<span class="t tt" style="left:98px;top:483px">运动控制轴</span>
<span class="t tt" style="left:121px;top:503px">Axis_0</span>
<span class="t tt" style="left:98px;top:523px">轴组设置</span>
<span class="t tt" style="left:98px;top:543px">EtherCAT</span>
<div class="a" style="left:119px;top:560px;width:69px;height:20px;background:#3399ff"></div>
<span class="t tt" style="left:121px;top:563px;color:#fff">InoSV630N</span>
<span class="t tt" style="left:98px;top:583px">COM0</span>
<span class="t tt" style="left:98px;top:603px">CAN(CANLink)</span>
<span class="t tt" style="left:98px;top:623px">以太网</span>
<span class="t tt" style="left:98px;top:643px">EtherNet/IP</span>
<span class="t tt" style="left:76px;top:663px">变量监控表</span>
<span class="t tt" style="left:98px;top:683px">MAIN</span>
<span class="t tt" style="left:76px;top:703px">交叉引用表</span>
<span class="t tt" style="left:76px;top:723px">元件使用表</span>
<span class="t tt" style="left:76px;top:743px">Trace</span>
<!-- table toolbar -->
<svg class="a" style="left:421px;top:117px" width="17" height="17" viewBox="0 0 17 17"><defs><radialGradient id="gg" cx="0.4" cy="0.35" r="0.7"><stop offset="0" stop-color="#8fe05a"/><stop offset="1" stop-color="#3c9a18"/></radialGradient></defs><circle cx="8.5" cy="8.5" r="8" fill="url(#gg)"/><path d="M8.5 3.5v10M3.5 8.5h10" stroke="#1f5a10" stroke-width="2.2"/></svg>
<span class="t" style="left:444px;top:118px">增加</span>
<svg class="a" style="left:477px;top:117px" width="17" height="18" viewBox="0 0 17 18"><path d="M2 2h9l3 3v12H2z" fill="#eeeeee" stroke="#d0d0d0"/><path d="M4 6h6M4 9h7M4 12h7" stroke="#cfcfcf"/><path d="M8 14l6-7 2 1.5-6 7-2.5 0.5z" fill="#f0b030" stroke="#b07010" stroke-width="0.6"/></svg>
<span class="t" style="left:499px;top:118px">编辑</span>
<svg class="a" style="left:530px;top:117px" width="18" height="18" viewBox="0 0 18 18"><defs><linearGradient id="xg" x1="0" y1="0" x2="0" y2="1"><stop offset="0" stop-color="#f06a6a"/><stop offset="1" stop-color="#c41c1c"/></linearGradient></defs><path d="M1.5 4l2.5-2.5 5 5 5-5 2.5 2.5-5 5 5 5-2.5 2.5-5-5-5 5-2.5-2.5 5-5z" fill="url(#xg)" stroke="#b82020" stroke-width="0.6"/></svg>
<span class="t" style="left:554px;top:118px">删除</span>
<div class="a" style="left:587px;top:115px;width:53px;height:21px;border:1px solid #acc1d4;background:linear-gradient(#f1f5f9,#dfe7ee)"></div>
<span class="t" style="left:601px;top:118px">折叠</span>
<div class="a" style="left:641px;top:114px;width:100px;height:23px;border:1px solid #7d9fbf;border-radius:2px;background:#fff"></div>
<div class="vl" style="left:720px;top:115px;height:21px;background:#a9bfd3"></div>
<div class="a" style="left:721px;top:115px;width:19px;height:21px;background:#fdfaf3"></div>
<svg class="a" style="left:726px;top:123px" width="9" height="5"><path d="M0 0h8l-4 4.5z" fill="#000"/></svg>
<span class="t" style="left:645px;top:118px">全部显示</span>
<svg class="a" style="left:752px;top:119px" width="13" height="13"><rect x="0.5" y="0.5" width="12" height="12" fill="#f2f2f2" stroke="#9a9a9a"/><path d="M3 6.5l2.5 2.5 4.5-5.5" fill="none" stroke="#7a7a7a" stroke-width="1.8"/></svg>
<span class="t mn2" style="left:771px;top:121px;color:#3b5a7a">PDO分配</span>
<svg class="a" style="left:822px;top:119px" width="13" height="13"><rect x="0.5" y="0.5" width="12" height="12" fill="#f2f2f2" stroke="#9a9a9a"/><path d="M3 6.5l2.5 2.5 4.5-5.5" fill="none" stroke="#7a7a7a" stroke-width="1.8"/></svg>
<span class="t mn2" style="left:841px;top:121px;color:#3b5a7a">PDO配置</span>
<span class="t mn2" style="left:915px;top:119px">PDO数据大小</span>
<span class="t mn2" style="left:1004px;top:106px">输出(Byte):12</span>
<span class="t mn2" style="left:1004px;top:127px">输入(Byte):22</span>

<!-- table header -->
<div class="a" style="left:421px;top:144px;width:748px;height:24px;border:1px solid #5e5e5e;border-right:none;background:#fff"></div>
<div class="a" style="left:423px;top:146px;width:746px;height:20px;background:linear-gradient(#f9f9fa,#e9eaec);border-top:1px solid #c9cdd2"></div>
<div class="vl" style="left:542px;top:146px;height:20px;background:#d5d7da"></div>
<div class="vl" style="left:802px;top:146px;height:20px;background:#d5d7da"></div>
<div class="vl" style="left:882px;top:146px;height:20px;background:#d5d7da"></div>
<div class="vl" style="left:962px;top:146px;height:20px;background:#d5d7da"></div>
<div class="vl" style="left:1002px;top:146px;height:20px;background:#d5d7da"></div>
<div class="vl" style="left:1052px;top:146px;height:20px;background:#d5d7da"></div>
<div class="vl" style="left:1092px;top:146px;height:20px;background:#d5d7da"></div>
<span class="t hd" style="left:455px;top:152px">输入/输出</span>
<span class="t hd" style="left:661px;top:152px">名字</span>
<span class="t hd" style="left:830px;top:152px">索引</span>
<span class="t hd" style="left:904px;top:152px">子索引</span>
<span class="t hd" style="left:971px;top:152px">长度</span>
<span class="t hd" style="left:1015px;top:152px">标志</span>
<span class="t hd mn2" style="left:1066px;top:153px">SM</span>
<span class="t hd" style="left:1121px;top:152px">类型</span>
<div id="rows">
<div class="row" style="top:168px;background:#f5f5f5">
<svg class="exp" width="10" height="10" viewBox="0 0 10 10"><rect x="0" y="0" width="9" height="9" fill="#eef0f8"/><path d="M8.5 0.5V8.5H0.5" fill="none" stroke="#5a6fb0"/><path d="M1.5 4.5h5M4 2v5" stroke="#3d56a0" stroke-width="1.3"/></svg>
<svg class="cb" width="13" height="13" viewBox="0 0 13 13"><defs><linearGradient id="cbg" x1="0" y1="0" x2="0" y2="1"><stop offset="0" stop-color="#f6f6f6"/><stop offset="1" stop-color="#dcdcdc"/></linearGradient></defs><rect x="0.5" y="0.5" width="12" height="12" fill="url(#cbg)" stroke="#8e8e8e"/></svg>
<span class="cj" style="left:44px">输出</span>
<span class="mn" style="left:133px">Outputs</span>
<span class="mn" style="left:393px">16#1600</span>
<span class="mn sub" style="left:473px">16#00</span>
<span class="mn sub" style="left:552px">8</span>
<span class="cj" style="left:587px;top:3px;font-size:13px">可编辑</span>
</div>
<div class="row" style="top:192px;background:#ffffff">
<svg class="exp" width="10" height="10" viewBox="0 0 10 10"><rect x="0" y="0" width="9" height="9" fill="#eef0f8"/><path d="M8.5 0.5V8.5H0.5" fill="none" stroke="#5a6fb0"/><path d="M1.5 4.5h5M4 2v5" stroke="#3d56a0" stroke-width="1.3"/></svg>
<svg class="cb" width="13" height="13" viewBox="0 0 13 13"><defs><linearGradient id="cbg" x1="0" y1="0" x2="0" y2="1"><stop offset="0" stop-color="#f6f6f6"/><stop offset="1" stop-color="#dcdcdc"/></linearGradient></defs><rect x="0.5" y="0.5" width="12" height="12" fill="url(#cbg)" stroke="#8e8e8e"/><path d="M3 6.5l2.5 2.5 4.5-5.5" fill="none" stroke="#6e6e6e" stroke-width="2"/></svg>
<span class="cj" style="left:44px">输出</span>
<span class="mn" style="left:133px">Outputs</span>
<span class="mn" style="left:393px">16#1701</span>
<span class="mn sub" style="left:473px">16#00</span>
<span class="mn sub" style="left:552px">12</span>
<span class="mn" style="left:589px">F</span>
<span class="mn" style="left:643px">2</span>
</div>
<div class="row" style="top:216px;background:#e8f4fd">
<svg class="exp" width="10" height="10" viewBox="0 0 10 10"><rect x="0" y="0" width="9" height="9" fill="#eef0f8"/><path d="M8.5 0.5V8.5H0.5" fill="none" stroke="#5a6fb0"/><path d="M1.5 4.5h5M4 2v5" stroke="#3d56a0" stroke-width="1.3"/></svg>
<svg class="cb" width="13" height="13" viewBox="0 0 13 13"><defs><linearGradient id="cbg" x1="0" y1="0" x2="0" y2="1"><stop offset="0" stop-color="#f6f6f6"/><stop offset="1" stop-color="#dcdcdc"/></linearGradient></defs><rect x="0.5" y="0.5" width="12" height="12" fill="url(#cbg)" stroke="#8e8e8e"/></svg>
<span class="cj" style="left:44px">输出</span>
<span class="mn" style="left:133px">Outputs</span>
<span class="mn" style="left:393px">16#1702</span>
<span class="mn sub" style="left:473px">16#00</span>
<span class="mn sub" style="left:552px">19</span>
<span class="mn" style="left:589px">F</span>
</div>
<div class="row" style="top:240px;background:#ffffff">
<svg class="exp" width="10" height="10" viewBox="0 0 10 10"><rect x="0" y="0" width="9" height="9" fill="#eef0f8"/><path d="M8.5 0.5V8.5H0.5" fill="none" stroke="#5a6fb0"/><path d="M1.5 4.5h5M4 2v5" stroke="#3d56a0" stroke-width="1.3"/></svg>
<svg class="cb" width="13" height="13" viewBox="0 0 13 13"><defs><linearGradient id="cbg" x1="0" y1="0" x2="0" y2="1"><stop offset="0" stop-color="#f6f6f6"/><stop offset="1" stop-color="#dcdcdc"/></linearGradient></defs><rect x="0.5" y="0.5" width="12" height="12" fill="url(#cbg)" stroke="#8e8e8e"/></svg>
<span class="cj" style="left:44px">输出</span>
<span class="mn" style="left:133px">Outputs</span>
<span class="mn" style="left:393px">16#1703</span>
<span class="mn sub" style="left:473px">16#00</span>
<span class="mn sub" style="left:552px">17</span>
<span class="mn" style="left:589px">F</span>
</div>
<div class="row" style="top:264px;background:#f5f5f5">
<svg class="exp" width="10" height="10" viewBox="0 0 10 10"><rect x="0" y="0" width="9" height="9" fill="#eef0f8"/><path d="M8.5 0.5V8.5H0.5" fill="none" stroke="#5a6fb0"/><path d="M1.5 4.5h5M4 2v5" stroke="#3d56a0" stroke-width="1.3"/></svg>
<svg class="cb" width="13" height="13" viewBox="0 0 13 13"><defs><linearGradient id="cbg" x1="0" y1="0" x2="0" y2="1"><stop offset="0" stop-color="#f6f6f6"/><stop offset="1" stop-color="#dcdcdc"/></linearGradient></defs><rect x="0.5" y="0.5" width="12" height="12" fill="url(#cbg)" stroke="#8e8e8e"/></svg>
<span class="cj" style="left:44px">输出</span>
<span class="mn" style="left:133px">Outputs</span>
<span class="mn" style="left:393px">16#1704</span>
<span class="mn sub" style="left:473px">16#00</span>
<span class="mn sub" style="left:552px">23</span>
<span class="mn" style="left:589px">F</span>
</div>
<div class="row" style="top:288px;background:#ffffff">
<svg class="exp" width="10" height="10" viewBox="0 0 10 10"><rect x="0" y="0" width="9" height="9" fill="#eef0f8"/><path d="M8.5 0.5V8.5H0.5" fill="none" stroke="#5a6fb0"/><path d="M1.5 4.5h5M4 2v5" stroke="#3d56a0" stroke-width="1.3"/></svg>
<svg class="cb" width="13" height="13" viewBox="0 0 13 13"><defs><linearGradient id="cbg" x1="0" y1="0" x2="0" y2="1"><stop offset="0" stop-color="#f6f6f6"/><stop offset="1" stop-color="#dcdcdc"/></linearGradient></defs><rect x="0.5" y="0.5" width="12" height="12" fill="url(#cbg)" stroke="#8e8e8e"/></svg>
<span class="cj" style="left:44px">输出</span>
<span class="mn" style="left:133px">Outputs</span>
<span class="mn" style="left:393px">16#1705</span>
<span class="mn sub" style="left:473px">16#00</span>
<span class="mn sub" style="left:552px">19</span>
<span class="mn" style="left:589px">F</span>
</div>
<div class="row" style="top:312px;background:#f5f5f5">
<svg class="exp" width="10" height="10" viewBox="0 0 10 10"><rect x="0" y="0" width="9" height="9" fill="#eef0f8"/><path d="M8.5 0.5V8.5H0.5" fill="none" stroke="#5a6fb0"/><path d="M1.5 4.5h5" stroke="#3d56a0" stroke-width="1.3"/></svg>
<svg class="cb" width="13" height="13" viewBox="0 0 13 13"><defs><linearGradient id="cbg" x1="0" y1="0" x2="0" y2="1"><stop offset="0" stop-color="#f6f6f6"/><stop offset="1" stop-color="#dcdcdc"/></linearGradient></defs><rect x="0.5" y="0.5" width="12" height="12" fill="url(#cbg)" stroke="#8e8e8e"/><path d="M3 6.5l2.5 2.5 4.5-5.5" fill="none" stroke="#6e6e6e" stroke-width="2"/></svg>
<span class="cj" style="left:44px">输入</span>
<span class="mn" style="left:133px">Inputs</span>
<span class="mn" style="left:393px">16#1A00</span>
<span class="mn sub" style="left:473px">16#00</span>
<span class="mn sub" style="left:552px">22</span>
<span class="cj" style="left:587px;top:3px;font-size:13px">可编辑</span>
<span class="mn" style="left:643px">3</span>
</div>
<div class="row" style="top:336px;background:#ffffff">
<span class="cj" style="left:58px">输入</span>
<span class="mn" style="left:133px">Statusword</span>
<span class="mn" style="left:393px">16#6041</span>
<span class="mn sub" style="left:473px">16#0</span>
<span class="mn sub" style="left:552px">2</span>
<span class="mn ty" style="left:678px">UINT</span>
</div>
<div class="row" style="top:360px;background:#f5f5f5">
<span class="cj" style="left:58px">输入</span>
<span class="mn" style="left:133px">Position actual value</span>
<span class="mn" style="left:393px">16#6064</span>
<span class="mn sub" style="left:473px">16#0</span>
<span class="mn sub" style="left:552px">4</span>
<span class="mn ty" style="left:678px">DINT</span>
</div>
<div class="row" style="top:384px;background:#ffffff">
<span class="cj" style="left:58px">输入</span>
<span class="mn" style="left:133px">Touch probe status</span>
<span class="mn" style="left:393px">16#60B9</span>
<span class="mn sub" style="left:473px">16#0</span>
<span class="mn sub" style="left:552px">2</span>
<span class="mn ty" style="left:678px">UINT</span>
</div>
<div class="row" style="top:408px;background:#f5f5f5">
<span class="cj" style="left:58px">输入</span>
<span class="mn" style="left:133px">Touch probe pos1 pos value</span>
<span class="mn" style="left:393px">16#60BA</span>
<span class="mn sub" style="left:473px">16#0</span>
<span class="mn sub" style="left:552px">4</span>
<span class="mn ty" style="left:678px">DINT</span>
</div>
<div class="row" style="top:432px;background:#ffffff">
<span class="cj" style="left:58px">输入</span>
<span class="mn" style="left:133px">Touch probe pos2 pos value</span>
<span class="mn" style="left:393px">16#60BC</span>
<span class="mn sub" style="left:473px">16#0</span>
<span class="mn sub" style="left:552px">4</span>
<span class="mn ty" style="left:678px">DINT</span>
</div>
<div class="row" style="top:456px;background:#f5f5f5">
<span class="cj" style="left:58px">输入</span>
<span class="mn" style="left:133px">Error code</span>
<span class="mn" style="left:393px">16#603F</span>
<span class="mn sub" style="left:473px">16#0</span>
<span class="mn sub" style="left:552px">2</span>
<span class="mn ty" style="left:678px">UINT</span>
</div>
<div class="row" style="top:480px;background:#bee0fc;box-shadow:inset 0 1px 0 #d6ebfc,inset 0 -1px 0 #d6ebfc">
<span class="cj" style="left:58px">输入</span>
<span class="mn" style="left:133px">Digital inputs</span>
<span class="mn" style="left:393px">16#60FD</span>
<span class="mn sub" style="left:473px">16#0</span>
<span class="mn sub" style="left:552px">4</span>
<span class="mn ty" style="left:678px">UDINT</span>
</div>
<div class="row" style="top:504px;background:#f5f5f5">
<svg class="exp" width="10" height="10" viewBox="0 0 10 10"><rect x="0" y="0" width="9" height="9" fill="#eef0f8"/><path d="M8.5 0.5V8.5H0.5" fill="none" stroke="#5a6fb0"/><path d="M1.5 4.5h5M4 2v5" stroke="#3d56a0" stroke-width="1.3"/></svg>
<svg class="cb" width="13" height="13" viewBox="0 0 13 13"><defs><linearGradient id="cbg" x1="0" y1="0" x2="0" y2="1"><stop offset="0" stop-color="#f6f6f6"/><stop offset="1" stop-color="#dcdcdc"/></linearGradient></defs><rect x="0.5" y="0.5" width="12" height="12" fill="url(#cbg)" stroke="#8e8e8e"/></svg>
<span class="cj" style="left:44px">输入</span>
<span class="mn" style="left:133px">Inputs</span>
<span class="mn" style="left:393px">16#1B01</span>
<span class="mn sub" style="left:473px">16#00</span>
<span class="mn sub" style="left:552px">28</span>
<span class="mn" style="left:589px">F</span>
</div>
<div class="row" style="top:528px;background:#ffffff">
<svg class="exp" width="10" height="10" viewBox="0 0 10 10"><rect x="0" y="0" width="9" height="9" fill="#eef0f8"/><path d="M8.5 0.5V8.5H0.5" fill="none" stroke="#5a6fb0"/><path d="M1.5 4.5h5M4 2v5" stroke="#3d56a0" stroke-width="1.3"/></svg>
<svg class="cb" width="13" height="13" viewBox="0 0 13 13"><defs><linearGradient id="cbg" x1="0" y1="0" x2="0" y2="1"><stop offset="0" stop-color="#f6f6f6"/><stop offset="1" stop-color="#dcdcdc"/></linearGradient></defs><rect x="0.5" y="0.5" width="12" height="12" fill="url(#cbg)" stroke="#8e8e8e"/></svg>
<span class="cj" style="left:44px">输入</span>
<span class="mn" style="left:133px">Inputs</span>
<span class="mn" style="left:393px">16#1B02</span>
<span class="mn sub" style="left:473px">16#00</span>
<span class="mn sub" style="left:552px">25</span>
<span class="mn" style="left:589px">F</span>
</div>
<div class="row" style="top:552px;background:#f5f5f5">
<svg class="exp" width="10" height="10" viewBox="0 0 10 10"><rect x="0" y="0" width="9" height="9" fill="#eef0f8"/><path d="M8.5 0.5V8.5H0.5" fill="none" stroke="#5a6fb0"/><path d="M1.5 4.5h5M4 2v5" stroke="#3d56a0" stroke-width="1.3"/></svg>
<svg class="cb" width="13" height="13" viewBox="0 0 13 13"><defs><linearGradient id="cbg" x1="0" y1="0" x2="0" y2="1"><stop offset="0" stop-color="#f6f6f6"/><stop offset="1" stop-color="#dcdcdc"/></linearGradient></defs><rect x="0.5" y="0.5" width="12" height="12" fill="url(#cbg)" stroke="#8e8e8e"/></svg>
<span class="cj" style="left:44px">输入</span>
<span class="mn" style="left:133px">Inputs</span>
<span class="mn" style="left:393px">16#1B03</span>
<span class="mn sub" style="left:473px">16#00</span>
<span class="mn sub" style="left:552px">29</span>
<span class="mn" style="left:589px">F</span>
</div>
<div class="row" style="top:576px;background:#ffffff">
<svg class="exp" width="10" height="10" viewBox="0 0 10 10"><rect x="0" y="0" width="9" height="9" fill="#eef0f8"/><path d="M8.5 0.5V8.5H0.5" fill="none" stroke="#5a6fb0"/><path d="M1.5 4.5h5M4 2v5" stroke="#3d56a0" stroke-width="1.3"/></svg>
<svg class="cb" width="13" height="13" viewBox="0 0 13 13"><defs><linearGradient id="cbg" x1="0" y1="0" x2="0" y2="1"><stop offset="0" stop-color="#f6f6f6"/><stop offset="1" stop-color="#dcdcdc"/></linearGradient></defs><rect x="0.5" y="0.5" width="12" height="12" fill="url(#cbg)" stroke="#8e8e8e"/></svg>
<span class="cj" style="left:44px">输入</span>
<span class="mn" style="left:133px">Inputs</span>
<span class="mn" style="left:393px">16#1B04</span>
<span class="mn sub" style="left:473px">16#00</span>
<span class="mn sub" style="left:552px">29</span>
<span class="mn" style="left:589px">F</span>
</div>
</div>
<svg class="a" style="left:0;top:0" width="1479" height="766"><g fill="none" stroke="#e2221b" stroke-width="3">
<ellipse cx="461" cy="323.6" rx="62" ry="16.8"/>
<ellipse cx="868.2" cy="487.5" rx="80" ry="19.7"/>
<ellipse cx="126.1" cy="558.4" rx="96.1" ry="31.9"/>
</g></svg>
</body></html>
